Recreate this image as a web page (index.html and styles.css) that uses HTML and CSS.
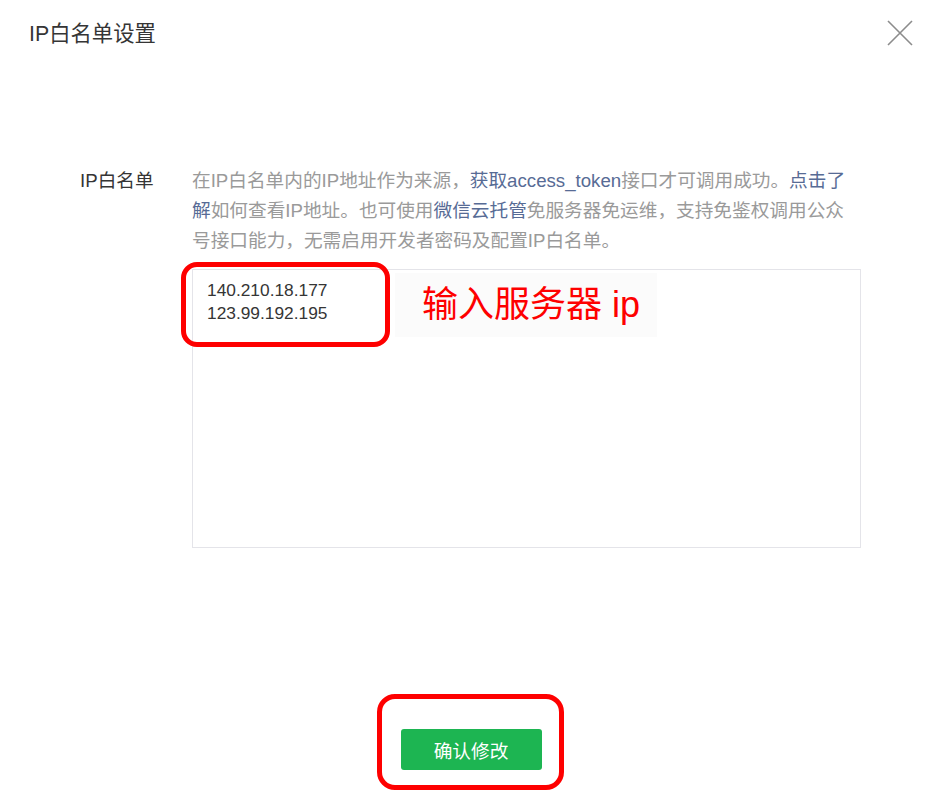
FILE: index.html
```html
<!DOCTYPE html>
<html lang="zh-CN">
<head>
<meta charset="utf-8">
<title>IP白名单设置</title>
<link rel="stylesheet" href="styles.css">
</head>
<body>
<div class="dialog">
  <div class="dialog-head">
    <h3 class="dialog-title">IP白名单设置</h3>
    <button class="close" aria-label="关闭">
      <svg width="26" height="26" viewBox="0 0 26 26"><path d="M1 1 L25 25 M25 1 L1 25" stroke="#8c8c8c" stroke-width="1.6" fill="none"/></svg>
    </button>
  </div>
  <div class="dialog-body">
    <div class="form-row">
      <label class="form-label">IP白名单</label>
      <div class="form-control">
        <p class="desc">在IP白名单内的IP地址作为来源，<a class="link">获取access_token</a>接口才可调用成功。<a class="link">点击了<br>解</a>如何查看IP地址。也可使用<a class="link">微信云托管</a>免服务器免运维，支持免鉴权调用公众<br>号接口能力，无需启用开发者密码及配置IP白名单。</p>
        <div class="textarea-wrap">
          <textarea class="ip-input">140.210.18.177
123.99.192.195</textarea>
          <div class="mark mark-ip"></div>
          <div class="note">输入服务器 ip</div>
        </div>
      </div>
    </div>
  </div>
  <div class="dialog-foot">
    <div class="btn-wrap">
      <button class="btn-primary">确认修改</button>
      <div class="mark mark-btn"></div>
    </div>
  </div>
</div>
</body>
</html>
```

FILE: styles.css
```css
html, body {
  margin: 0;
  padding: 0;
  background: #fff;
}
body {
  font-family: "Liberation Sans", "Noto Sans CJK SC", sans-serif;
  color: #353535;
  width: 942px;
  height: 798px;
  overflow: hidden;
}
.dialog {
  display: flex;
  flex-direction: column;
  height: 798px;
}
.dialog-head {
  display: flex;
  justify-content: space-between;
  align-items: flex-start;
  padding: 19px 29px 0 29px;
}
.dialog-title {
  margin: 0;
  font-size: 21.33px;
  line-height: 30px;
  font-weight: normal;
  color: #353535;
}
.close {
  border: 0;
  background: none;
  padding: 0;
  margin-top: 1px;
  width: 26px;
  height: 26px;
  cursor: pointer;
}
.close svg { display: block; }
.dialog-body {
  padding: 117px 0 0 80px;
}
.form-row {
  display: flex;
}
.form-label {
  width: 112px;
  flex: none;
  font-size: 18.67px;
  line-height: 30px;
  color: #353535;
}
.form-control {
  width: 669px;
}
.desc {
  margin: 0;
  font-size: 18.67px;
  line-height: 30px;
  color: #9a9a9a;
  white-space: nowrap;
}
.link {
  color: #576b95;
  text-decoration: none;
}
.textarea-wrap {
  position: relative;
  margin-top: 13px;
}
.ip-input {
  display: block;
  box-sizing: border-box;
  width: 669px;
  height: 279px;
  margin: 0;
  padding: 9px 14px;
  border: 1px solid #e4e4e9;
  border-radius: 0;
  resize: none;
  outline: none;
  font-family: "Liberation Sans", "Noto Sans CJK SC", sans-serif;
  font-size: 17.33px;
  line-height: 23px;
  color: #353535;
  background: #fff;
}
.mark {
  position: absolute;
  box-sizing: border-box;
  border: 5px solid #fe0000;
}
.mark-ip {
  left: -11px;
  top: -7px;
  width: 209px;
  height: 85px;
  border-radius: 16px;
}
.note {
  position: absolute;
  left: 203px;
  top: 4px;
  width: 262px;
  height: 64px;
  box-sizing: border-box;
  padding-left: 27px;
  background: #fbfbfb;
  color: #fe0000;
  font-size: 36px;
  line-height: 64px;
  white-space: pre;
}
.dialog-foot {
  margin-top: auto;
  display: flex;
  justify-content: center;
  padding-bottom: 28px;
}
.btn-wrap {
  position: relative;
}
.btn-primary {
  display: block;
  width: 141px;
  height: 41px;
  border: 0;
  border-radius: 3px;
  background: #1db552;
  color: #fff;
  font-family: "Liberation Sans", "Noto Sans CJK SC", sans-serif;
  font-size: 18.67px;
  padding: 0;
  cursor: pointer;
}
.mark-btn {
  left: -24px;
  top: -35px;
  width: 187px;
  height: 96px;
  border-radius: 18px;
}
```
